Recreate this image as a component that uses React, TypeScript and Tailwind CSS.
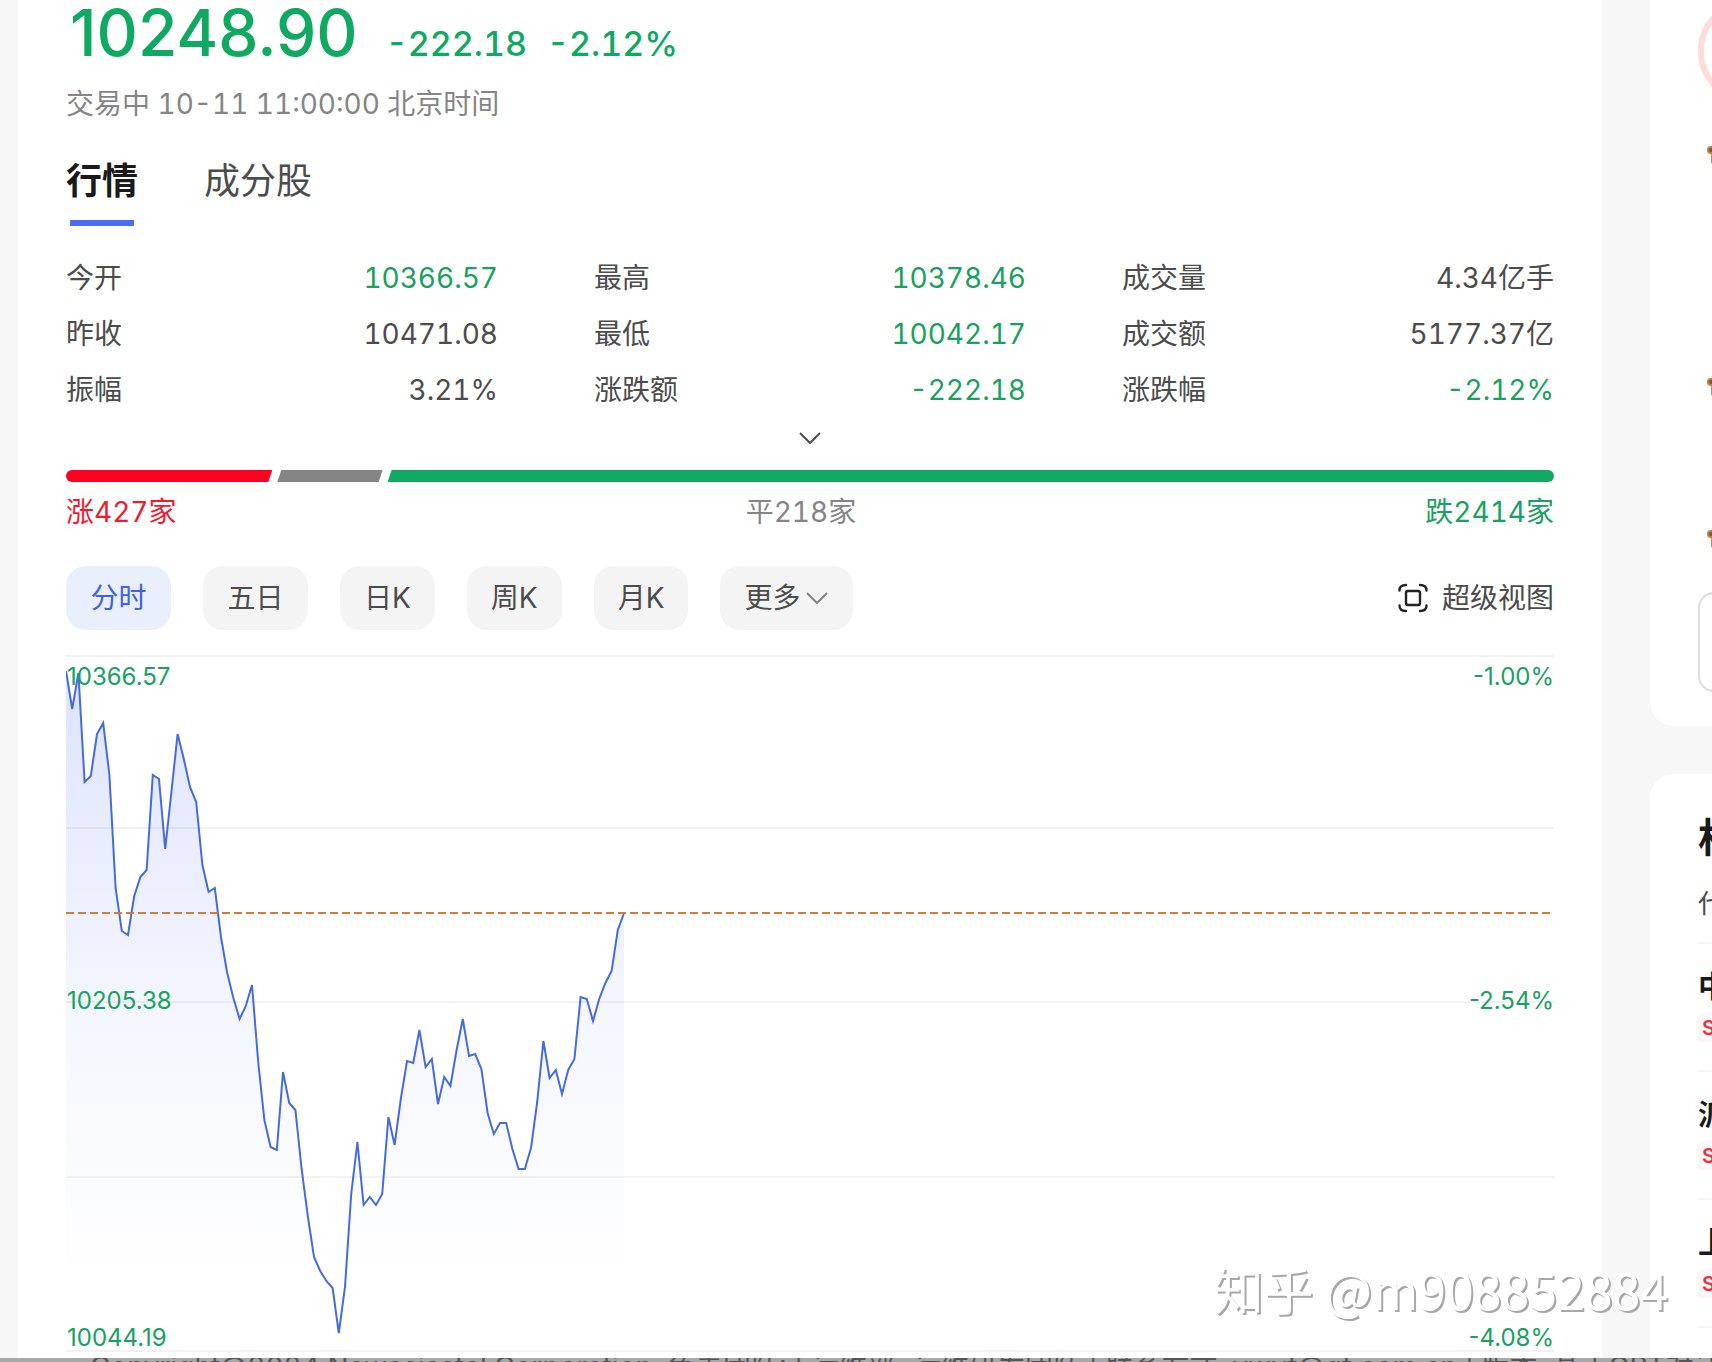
import React, { useState } from "react";
import { FiChevronDown } from "react-icons/fi";

type Stat = { label: string; value: string; down?: boolean };

const stats: Stat[] = [
  { label: "今开", value: "10366.57", down: true },
  { label: "最高", value: "10378.46", down: true },
  { label: "成交量", value: "4.34亿手" },
  { label: "昨收", value: "10471.08" },
  { label: "最低", value: "10042.17", down: true },
  { label: "成交额", value: "5177.37亿" },
  { label: "振幅", value: "3.21%" },
  { label: "涨跌额", value: "-222.18", down: true },
  { label: "涨跌幅", value: "-2.12%", down: true },
];

const breadth = [
  { label: "涨427家", count: 427, text: "text-[#f5182f]", bar: "rounded-l-full bg-[#ff0022] [clip-path:polygon(0_0,100%_0,calc(100%-4px)_100%,0_100%)]" },
  { label: "平218家", count: 218, text: "text-[#858585]", bar: "bg-[#858585] [clip-path:polygon(4px_0,100%_0,calc(100%-4px)_100%,0_100%)]" },
  { label: "跌2414家", count: 2414, text: "text-[#18a160]", bar: "rounded-r-full bg-[#10a962] [clip-path:polygon(4px_0,100%_0,100%_100%,0_100%)]" },
];

const periods = ["分时", "五日", "日K", "周K", "月K"];

// one value per minute, a full session has 240 of them
const minutes = [
  16, 54, 18, 127, 121, 79, 68, 120, 233, 276, 280, 241, 222, 215, 120, 124, 194, 137, 79, 104,
  132, 147, 210, 237, 233, 282, 318, 343, 364, 351, 330, 407, 465, 492, 495, 417, 448, 455, 514, 561,
  602, 616, 626, 633, 678, 632, 539, 487, 550, 542, 550, 539, 462, 490, 444, 406, 408, 375, 412, 404,
  449, 422, 431, 395, 364, 401, 399, 414, 458, 479, 468, 468, 494, 514, 514, 493, 447, 386, 423, 415,
  439, 415, 404, 342, 344, 366, 344, 328, 316, 275, 258,
];

const STEP = 6.2;
const gridLines = [1, 173, 347, 522, 696];

const related = [
  { name: "中芯国际", tag: "SH" },
  { name: "派能科技", tag: "SH" },
  { name: "上海莱士", tag: "SZ" },
];

const PriceChart: React.FC = () => {
  const line = minutes.map((y, i) => `${(i * STEP).toFixed(1)},${y}`).join(" ");
  const end = (minutes.length - 1) * STEP;

  return (
    <div className="relative mt-[25px] h-[698px] text-2xl text-[#18a160] normal-nums">
      <svg viewBox="0 0 1488 698" preserveAspectRatio="none" className="block h-full w-full" aria-hidden="true">
        <defs>
          <linearGradient id="area" x1="0" y1="0" x2="0" y2="1">
            <stop offset="0" stopColor="#4e6ef2" stopOpacity="0.19" />
            <stop offset="0.5" stopColor="#4e6ef2" stopOpacity="0.06" />
            <stop offset="0.9" stopColor="#4e6ef2" stopOpacity="0" />
          </linearGradient>
        </defs>
        {gridLines.map((y) => (
          <line key={y} x1="0" x2="1488" y1={y} y2={y} stroke="#f1f2f4" strokeWidth="2" />
        ))}
        <polygon points={`0,698 ${line} ${end},698`} fill="url(#area)" />
        <polyline points={line} fill="none" stroke="#466bdb" strokeWidth="2" />
        <line x1="0" x2="1488" y1="258" y2="258" stroke="#d67a3c" strokeWidth="2" strokeDasharray="8 4" />
      </svg>
      <div className="absolute inset-x-0 top-2 flex justify-between pl-px leading-7">
        <span>10366.57</span>
        <span>-1.00%</span>
      </div>
      <div className="absolute inset-x-0 top-[332px] flex justify-between pl-px leading-7">
        <span>10205.38</span>
        <span>-2.54%</span>
      </div>
      <div className="absolute inset-x-0 bottom-px flex justify-between pl-px leading-7">
        <span>10044.19</span>
        <span>-4.08%</span>
      </div>
    </div>
  );
};

const Medal: React.FC = () => (
  <svg viewBox="0 0 32 24" className="h-6 w-8" aria-hidden="true">
    <rect x="4" y="6" width="24" height="14" rx="2" fill="#8fa56b" />
    <rect x="0" y="2" width="32" height="8" rx="4" fill="#b8804f" />
    <circle cx="4" cy="6" r="2" fill="#8a5428" />
  </svg>
);

const App: React.FC = () => {
  const [tab, setTab] = useState("行情");
  const [period, setPeriod] = useState("分时");

  return (
    <div className="flex h-screen flex-col overflow-hidden bg-[#f7f7f7] font-[Inter,'Noto_Sans_CJK_SC',sans-serif] text-[#4c4c4c] tabular-nums">
      <div className="flex min-h-0 flex-1 gap-12 overflow-hidden pl-[18px]">
        <main className="relative min-w-0 flex-1 bg-white px-12 pt-px">
          <div className="flex items-baseline pl-1 text-[#10a962]">
            <span className="text-[64px] leading-16 font-medium normal-nums">10248.90</span>
            <span className="ml-7 text-[34px] leading-10 font-medium">-222.18</span>
            <span className="ml-5 text-[34px] leading-10 font-medium">-2.12%</span>
          </div>
          <p className="mt-[19px] text-[28px] leading-10 text-[#858585]">交易中 10-11 11:00:00 北京时间</p>

          <div className="mt-8 flex gap-[66px] text-4xl leading-[50px]">
            {["行情", "成分股"].map((name) => (
              <button
                key={name}
                onClick={() => setTab(name)}
                className={`flex flex-col items-center ${tab === name ? "font-bold text-[#1a1a1a]" : ""}`}
              >
                {name}
                {tab === name && <span className="mt-[14px] h-[6px] w-16 bg-[#4e6ef2]" />}
              </button>
            ))}
          </div>

          <dl className="mt-6 grid grid-cols-3 gap-x-24 text-[28px] leading-14">
            {stats.map((item) => (
              <div key={item.label} className="flex justify-between">
                <dt>{item.label}</dt>
                <dd className={item.down ? "text-[#18a160]" : ""}>{item.value}</dd>
              </div>
            ))}
          </dl>

          <button aria-label="展开" className="flex h-10 w-full items-center justify-center">
            <svg viewBox="0 0 22 14" className="h-[14px] w-[22px]" fill="none" stroke="currentColor" strokeWidth="2">
              <path d="M1 2l10 10 10-10" />
            </svg>
          </button>

          <div className="mt-3 flex h-3 gap-[5px]">
            {breadth.map((b) => (
              <div key={b.label} className={`basis-0 ${b.bar}`} style={{ flexGrow: b.count }} />
            ))}
          </div>
          <div className="mt-[10px] flex justify-between text-[28px] leading-10">
            {breadth.map((b) => (
              <span key={b.label} className={b.text}>{b.label}</span>
            ))}
          </div>

          <div className="mt-[34px] flex items-center gap-8 text-[28px]">
            {periods.map((name) => (
              <button
                key={name}
                onClick={() => setPeriod(name)}
                className={`h-16 rounded-[20px] px-6 ${name.endsWith("K") ? "" : "min-w-[105px]"} ${period === name ? "bg-[#e9effd] text-[#3f62e8]" : "bg-[#f4f4f4]"}`}
              >
                {name}
              </button>
            ))}
            <button className="flex h-16 items-center gap-1 rounded-[20px] bg-[#f4f4f4] px-6">
              更多
              <svg viewBox="0 0 24 24" className="h-6 w-6" fill="none" stroke="#858585" strokeWidth="2">
                <path d="M2 7l10 10 10-10" />
              </svg>
            </button>
            <button className="ml-auto flex items-center gap-[14px]">
              <svg viewBox="0 0 30 30" className="h-[30px] w-[30px]" fill="none" stroke="#222" strokeWidth="2.4" strokeLinecap="round">
                <path d="M1.5 7.500Q1.500 2 8 2M22 2Q28.500 2 28.500 7.500M28.500 22.500Q28.500 28 22 28M8 28Q1.500 28 1.500 22.500" />
                <rect x="8" y="8" width="14" height="14" rx="2" />
              </svg>
              超级视图
            </button>
          </div>

          <PriceChart />
        </main>

        <aside className="-mr-[318px] w-[380px] shrink-0">
          <section className="rounded-b-3xl bg-white px-12 pb-[34px]">
            <div className="h-[102px] w-[100px] rounded-full border-[6px] border-[#fddcdc]" />
            <div className="flex h-[490px] flex-col pt-1 pl-[9px]">
              <div className="h-[232px] pt-[38px]"><Medal /></div>
              <div className="h-[152px] pt-[38px]"><Medal /></div>
              <div className="pt-[38px]"><Medal /></div>
            </div>
            <button className="flex h-[100px] w-full items-center justify-center rounded-2xl border-2 border-[#dedede]" aria-label="更多">
              <FiChevronDown />
            </button>
          </section>

          <section className="mt-12 rounded-t-3xl bg-white px-12 pt-9 pb-40">
            <h2 className="text-[40px] leading-14 font-bold text-[#1a1a1a]">相关股票</h2>
            <p className="mt-[18px] border-b-2 border-[#f4f4f4] pb-[18px] text-[26px] leading-10">代码</p>
            {related.map((item) => (
              <div key={item.name} className="h-32 border-b-2 border-[#f4f4f4] pt-[22px]">
                <div className="text-[30px] leading-10 font-bold text-[#1a1a1a]">{item.name}</div>
                <span className="mt-2 inline-block rounded bg-[#fff6f6] px-1 text-xl leading-7 font-semibold text-[#e03546]">{item.tag}</span>
              </div>
            ))}
          </section>
        </aside>
      </div>

      <footer className="h-1 shrink-0 overflow-hidden bg-[#a8a8a8] pl-[90px] text-[28px] leading-[18px] whitespace-nowrap text-[#555]">
        Copyright@2024 Newasiastal Corporation, 负责团队: | 运维部-运维研发团队 | 联系方式: ywyf@gf.com.cn | 版本: 基于GPT对话高
      </footer>

      <div className="pointer-events-none absolute right-11 bottom-[42px] text-[50px] leading-16 font-[Noto_Sans_CJK_SC,sans-serif] text-white [text-shadow:2px_2px_0_#a8a8a8]">
        知乎 @m908852884
      </div>
    </div>
  );
};

export default App;
